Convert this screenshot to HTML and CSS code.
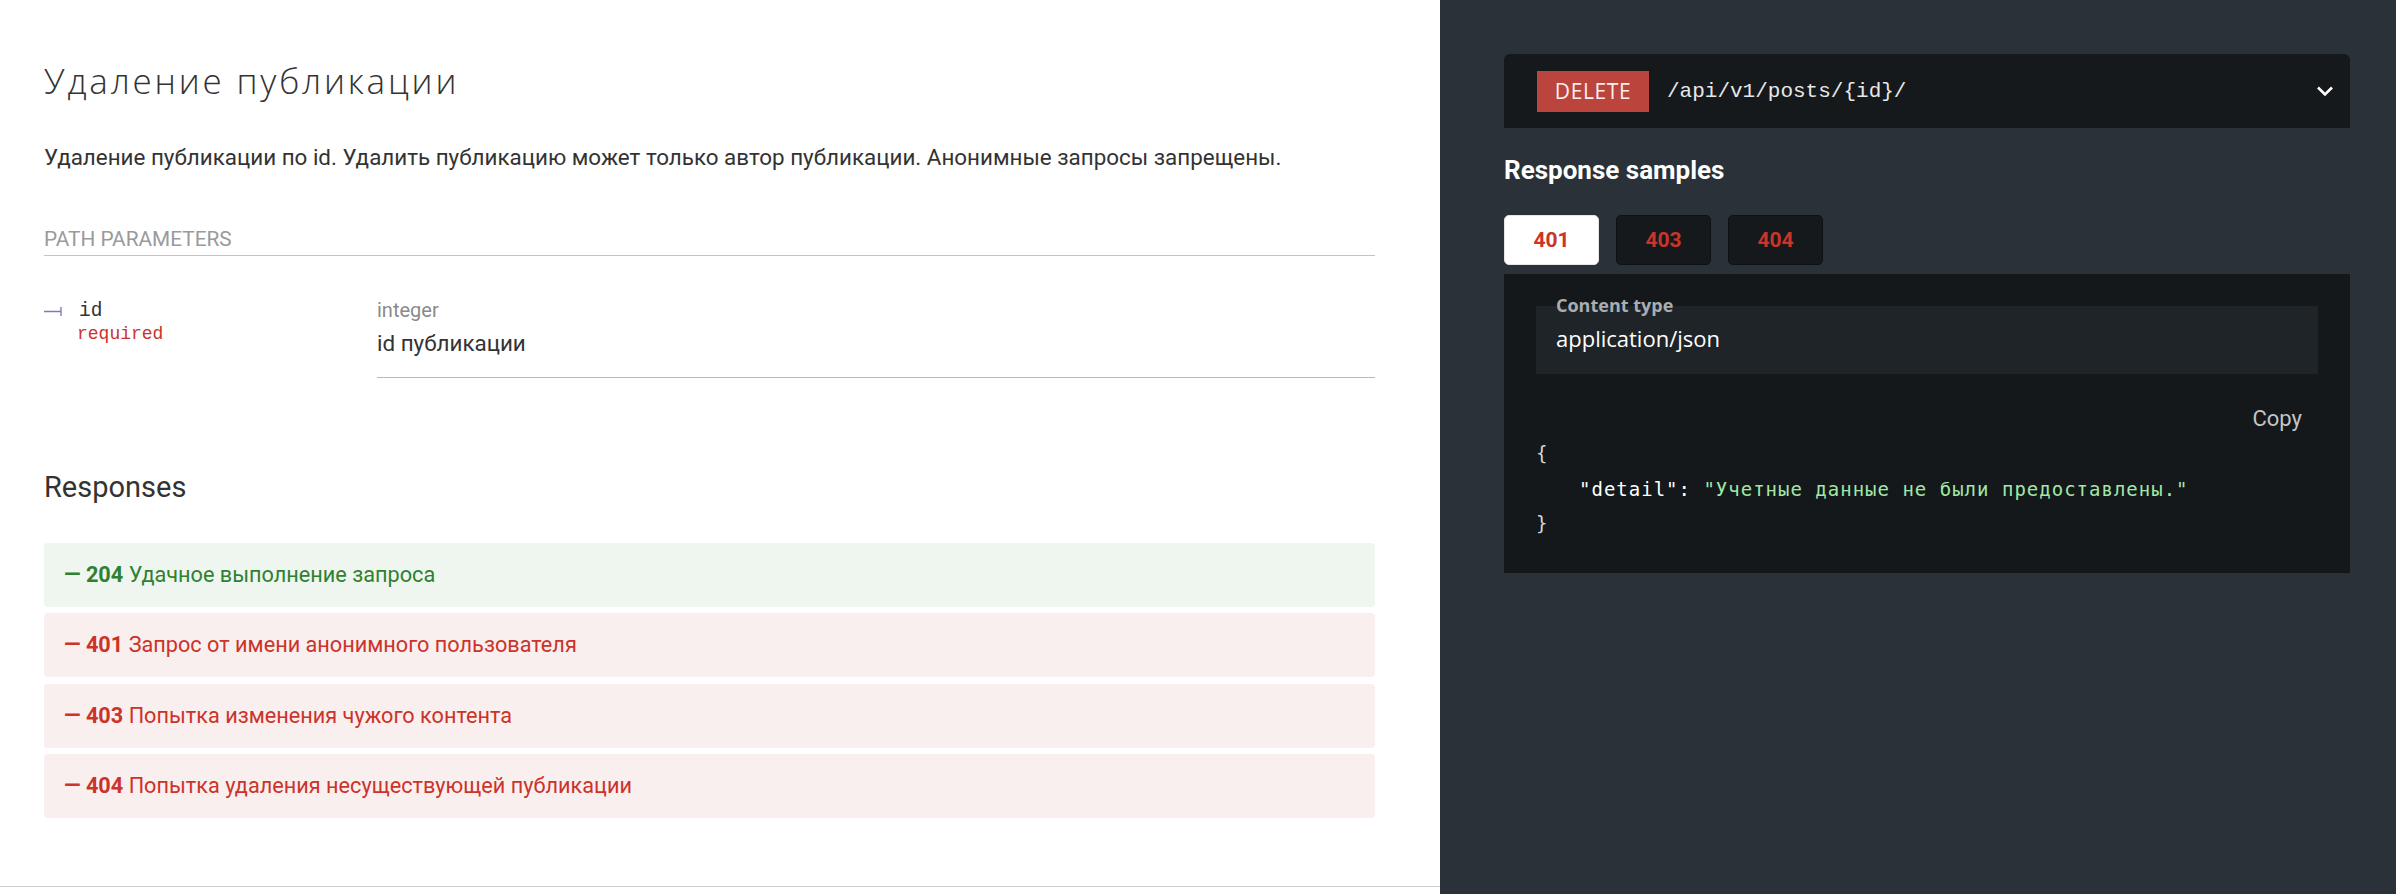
FILE: index.html
```
<!DOCTYPE html>
<html lang="ru">
<head>
<meta charset="utf-8">
<title>Удаление публикации</title>
<link rel="stylesheet" href="styles.css">
</head>
<body>
<div class="page">
  <main class="doc">
    <section class="op">
      <h2 class="op-title">Удаление публикации</h2>
      <p class="op-desc">Удаление публикации по id. Удалить публикацию может только автор публикации. Анонимные запросы запрещены.</p>
      <h5 class="params-title">Path Parameters</h5>
      <div class="param">
        <div class="param-name">
          <div class="param-id">
            <svg class="param-line" width="18" height="16" viewBox="0 0 18 16"><path d="M0 8.5H17M17 4V13" stroke="#7c7cbb" stroke-width="1.4" fill="none"/></svg>
            <span>id</span>
          </div>
          <div class="param-req">required</div>
        </div>
        <div class="param-info">
          <div class="param-type">integer</div>
          <div class="param-desc">id публикации</div>
        </div>
      </div>
      <h3 class="responses-title">Responses</h3>
      <div class="responses">
        <div class="resp resp-ok"><strong>— 204</strong> Удачное выполнение запроса</div>
        <div class="resp resp-err"><strong>— 401</strong> Запрос от имени анонимного пользователя</div>
        <div class="resp resp-err"><strong>— 403</strong> Попытка изменения чужого контента</div>
        <div class="resp resp-err"><strong>— 404</strong> Попытка удаления несуществующей публикации</div>
      </div>
    </section>
  </main>
  <aside class="panel">
    <div class="endpoint">
      <span class="badge">DELETE</span>
      <span class="path">/api/v1/posts/{id}/</span>
      <svg class="chevron" width="18" height="12" viewBox="0 0 18 12"><path d="M2 2.5L9 9.5L16 2.5" stroke="#fff" stroke-width="2.6" fill="none"/></svg>
    </div>
    <h3 class="rs-title">Response samples</h3>
    <div class="tabs">
      <div class="tab tab-active">401</div>
      <div class="tab">403</div>
      <div class="tab">404</div>
    </div>
    <div class="sample">
      <div class="ctype">
        <span class="ctype-label">Content type</span>
        application/json
      </div>
      <div class="copy-row"><span class="copy">Copy</span></div>
      <div class="code">
        <div class="code-line code-punct">{</div>
        <div class="code-line code-indent"><span class="code-key">"detail"</span>: <span class="code-str">"Учетные данные не были предоставлены."</span></div>
        <div class="code-line code-last code-punct">}</div>
      </div>
    </div>
  </aside>
</div>
</body>
</html>
```

FILE: styles.css
```
html, body {
  margin: 0;
  padding: 0;
}
body {
  font-family: Roboto, "Liberation Sans", sans-serif;
  color: #333;
  background: #fff;
}
.page {
  display: flex;
  width: 2396px;
  min-height: 894px;
}
.doc {
  width: 1440px;
  flex: none;
}
.op {
  padding: 0 65px 68px 44px;
  border-bottom: 1px solid #cfcfcf;
}
.op-title {
  margin: 61.4px 0 0;
  font-family: "Open Sans", sans-serif;
  font-weight: 300;
  font-size: 35px;
  line-height: 40px;
  letter-spacing: 2.8px;
  color: #333;
}
.op-desc {
  margin: 40px 0 0;
  font-size: 22.4px;
  line-height: 32px;
  color: #333;
}
.params-title {
  margin: 53.5px 0 0;
  padding-bottom: 4px;
  border-bottom: 1px solid #c4c4c4;
  font-size: 20.8px;
  line-height: 24px;
  font-weight: 400;
  color: #9a9a9a;
  text-transform: uppercase;
}
.param {
  display: flex;
  margin-top: 42.1px;
}
.param-name {
  width: 333px;
  flex: none;
  padding-top: 1px;
}
.param-id {
  display: flex;
  align-items: center;
  font-family: "Liberation Mono", monospace;
  font-size: 19.5px;
  line-height: 24px;
  color: #333;
}
.param-line {
  margin-right: 17px;
  flex: none;
}
.param-req {
  padding-left: 33px;
  font-family: "Liberation Mono", monospace;
  font-size: 18px;
  line-height: 22px;
  color: #cc3329;
}
.param-info {
  flex: 1;
  border-bottom: 1px solid #b6bbc1;
  padding-bottom: 17.6px;
}
.param-type {
  font-size: 20px;
  line-height: 24px;
  color: #8a8a8a;
}
.param-desc {
  margin-top: 5.4px;
  font-size: 22.4px;
  line-height: 32px;
  color: #333;
}
.responses-title {
  margin: 92.1px 0 0;
  font-size: 29px;
  line-height: 34px;
  font-weight: 400;
  color: #333;
}
.responses {
  margin-top: 38.9px;
}
.resp {
  height: 64px;
  box-sizing: border-box;
  padding: 16px 20px;
  font-size: 21.7px;
  line-height: 32px;
  border-radius: 4px;
  margin-bottom: 6.33px;
}
.resp:last-child {
  margin-bottom: 0;
}
.resp strong {
  font-weight: 700;
}
.resp-ok {
  background: #eff5ef;
  color: #2f8132;
}
.resp-err {
  background: #f9efef;
  color: #cc3329;
}

.panel {
  flex: 1;
  background: #2a3138;
  padding: 54px 46px 0 64px;
}
.endpoint {
  height: 74px;
  display: flex;
  align-items: center;
  padding: 0 16px 0 33px;
  background: #15191c;
  border-radius: 6px 6px 0 0;
}
.badge {
  width: 112px;
  height: 41px;
  line-height: 41px;
  text-align: center;
  background: #bb443d;
  color: #fbeeee;
  font-family: "Open Sans", sans-serif;
  font-size: 21px;
  letter-spacing: 0.6px;
}
.path {
  flex: 1;
  margin-left: 18px;
  font-family: "Liberation Mono", monospace;
  font-size: 21px;
  color: #e8e8e8;
}
.chevron {
  flex: none;
}
.rs-title {
  margin: 27.1px 0 0;
  font-size: 26px;
  line-height: 30px;
  font-weight: 700;
  color: #fff;
}
.tabs {
  display: flex;
  gap: 17px;
  margin-top: 29.9px;
}
.tab {
  width: 95px;
  height: 50px;
  box-sizing: border-box;
  display: flex;
  align-items: center;
  justify-content: center;
  border-radius: 5px;
  background: #15191c;
  border: 1px solid #0e1113;
  color: #cc3329;
  font-size: 21px;
  font-weight: 700;
}
.tab-active {
  background: #fff;
  border-color: #e6e6e6;
}
.sample {
  margin-top: 9px;
  background: #14181b;
  padding: 32px 32px 36px;
}
.ctype {
  position: relative;
  height: 68px;
  box-sizing: border-box;
  padding: 18.5px 20px 0;
  background: #1e2428;
  font-family: "Open Sans", sans-serif;
  font-size: 22px;
  line-height: 28px;
  color: #fff;
}
.ctype-label {
  position: absolute;
  top: -12px;
  left: 20px;
  font-family: "Open Sans", sans-serif;
  font-weight: 700;
  font-size: 18px;
  line-height: 22px;
  color: #a9adb1;
}
.copy-row {
  margin-top: 28.75px;
  padding-right: 16px;
  text-align: right;
  font-size: 22px;
  line-height: 31.5px;
}
.copy {
  color: #c4c4c4;
}
.code {
  margin-top: 5.75px;
  font-family: "DejaVu Sans Mono", monospace;
  font-size: 19px;
  line-height: 27px;
  letter-spacing: 1px;
  color: #fff;
}
.code-punct {
  color: #d6d6d6;
}
.code-indent {
  padding-left: 43px;
  margin-top: 9px;
}
.code-last {
  margin-top: 7px;
}
.code-key {
  color: #fff;
}
.code-str {
  color: #a2e7a8;
}
```
